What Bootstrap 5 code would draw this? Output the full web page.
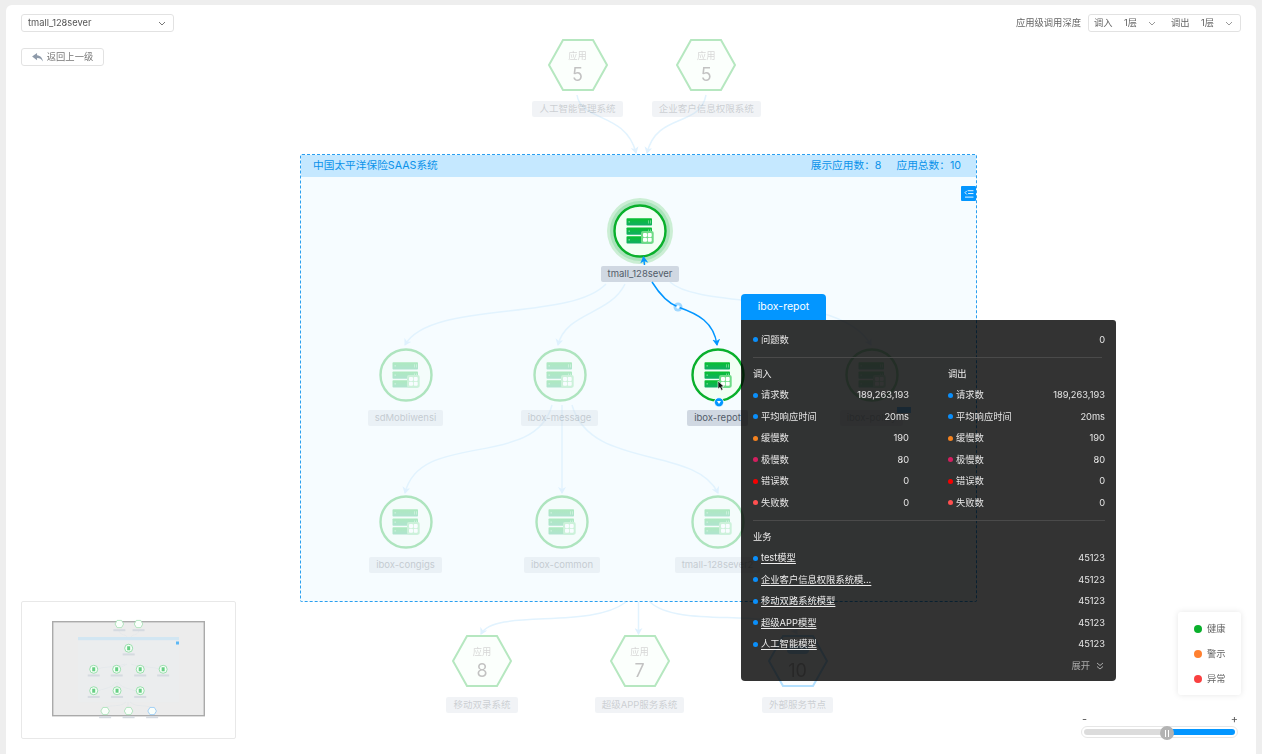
<!DOCTYPE html>
<html lang="zh-CN">
<head>
  <meta charset="UTF-8" />
  <meta name="viewport" content="width=device-width, initial-scale=1.0"/>
  <title>应用拓扑</title>
  <link href="https://cdn.jsdelivr.net/npm/bootstrap@5.3.0/dist/css/bootstrap.min.css" rel="stylesheet">
  <style>
    html, body {
      height: 754px;
      overflow: hidden;
    }
    body {
      background-color: #eeeeee;
      font-family: Inter, "Noto Sans CJK SC", sans-serif;
      font-size: 9.3px;
      color: #555;
      position: relative;
    }
    .app-panel {
      position: absolute;
      left: 6px;
      top: 5px;
      width: 1250px;
      height: 749px;
      background: #fff;
      border-radius: 6px 6px 0 0;
    }
    .topo-canvas {
      position: absolute;
      left: 0;
      top: 0;
      width: 1262px;
      height: 754px;
    }
    .topo-canvas svg.layer {
      position: absolute;
      left: 0;
      top: 0;
    }
    .toolbar {
      position: relative;
      padding: 14px 21px 0;
      z-index: 5;
    }
    .toolbar .form-select {
      width: 153px;
      height: 18px;
      min-height: 18px;
      padding: 0 6px;
      font-size: 9.3px;
      line-height: 16px;
      color: #555;
      border-color: #e2e2e2;
      border-radius: 3px;
      background-image: url("data:image/svg+xml,%3csvg xmlns='http://www.w3.org/2000/svg' viewBox='0 0 8 5'%3e%3cpath fill='none' stroke='%23777' d='M1 1l3 3 3-3'/%3e%3c/svg%3e");
      background-size: 8px 5px;
      background-position: right 7px center;
    }
    .depth-box {
      width: 153px;
      height: 18px;
      border: 1px solid #e2e2e2;
      border-radius: 3px;
      padding-left: 5px;
      color: #666;
    }
    .depth-item { width: 77px; flex: none; }
    .depth-item span:first-child { width: 30px; }
    .depth-item span:nth-child(2) { width: 24px; }
    .depth-label { margin-right: 7px; color: #666; }
    .back-btn {
      position: relative;
      z-index: 5;
      margin: 16px 0 0 21px;
      width: 83px;
      height: 18px;
      padding: 0;
      font-size: 9.3px;
      line-height: 16px;
      color: #777;
      border: 1px solid #e2e2e2;
      border-radius: 3px;
      background: #fff;
    }
    .group-box {
      position: absolute;
      left: 300px;
      top: 154px;
      width: 677px;
      height: 448px;
      background: #f6fcff;
      border: 1px dashed #2a9ff0;
      border-radius: 2px;
    }
    .group-head {
      height: 22px;
      padding: 0 15px 0 12px;
      background: #c5e8ff;
      color: #0a92ea;
      font-size: 10.7px;
    }
    .group-head .group-stat { margin-left: 15px; }
    .group-tool {
      position: absolute;
      right: 0;
      top: 31px;
      width: 15px;
      height: 15px;
      background: #0396ff;
      border-radius: 1px;
    }
    .topo-node {
      position: absolute;
      width: 130px;
    }
    .topo-node.is-faded { opacity: .3; }
    .topo-node svg { display: block; margin: 0 auto; overflow: visible; }
    .node-text {
      height: 16px;
      line-height: 16px;
      padding: 0 7px;
      margin-top: 2px;
      background: #d0d8e2;
      border-radius: 2px;
      color: #525c69;
      font-size: 9.5px;
      white-space: nowrap;
    }
    .hex-wrap { position: relative; height: 66px; }
    .hex-wrap + .node-text { margin-top: 3px; }
    .hex-caption {
      position: absolute;
      left: 0;
      right: 0;
      top: 18px;
      text-align: center;
      font-size: 9.3px;
      line-height: 12px;
      color: #777;
    }
    .hex-num {
      position: absolute;
      left: 0;
      right: 0;
      top: 30.5px;
      text-align: center;
      font-size: 18px;
      line-height: 24px;
      color: #333;
    }
    .hex-pill {
      position: absolute;
      left: 54px;
      top: 18px;
      width: 22px;
      height: 8px;
      border-radius: 4px;
      background: #0396ff;
    }
    .new-tag {
      position: absolute;
      left: 897px;
      top: 407px;
      width: 14px;
      height: 6px;
      background: #0396ff;
      opacity: .5;
    }
    .pop-tab {
      position: absolute;
      left: 741px;
      top: 294px;
      width: 85px;
      height: 26px;
      background: #0396ff;
      border-radius: 4px 4px 0 0;
      color: #fff;
      font-size: 10.5px;
      z-index: 7;
    }
    .pop-card {
      position: absolute;
      left: 741px;
      top: 320px;
      width: 375px;
      height: 361px;
      padding: 9px 11px 0 12px;
      background: rgba(0, 0, 0, .8);
      border-radius: 0 3px 4px 4px;
      color: #e6e6e6;
      z-index: 7;
    }
    .pop-row {
      height: 21.5px;
      white-space: nowrap;
    }
    .pop-dot {
      width: 5px;
      height: 5px;
      border-radius: 50%;
      margin-right: 3px;
      flex: none;
    }
    .pop-line {
      height: 1px;
      margin-top: 6.5px;
      background: #4a4a4a;
    }
    .pop-line.is-short { margin-right: 3px; }
    .pop-head { margin-top: 5px; color: #eee; }
    .pop-cols { gap: 39px; }
    .pop-col-left { width: 156px; }
    .pop-col-right { width: 157px; }
    .pop-link { color: #eee; text-decoration: underline; text-underline-offset: 2px; }
    .pop-more { color: #aaa; gap: 6px; padding-right: 1px; }
    .mini-map {
      position: absolute;
      left: 21px;
      top: 601px;
      width: 215px;
      height: 138px;
      background: #fff;
      border: 1px solid #e8e8e8;
      border-radius: 2px;
    }
    .mini-map svg { position: absolute; left: -1px; top: -1px; overflow: visible; }
    .legend-box {
      position: absolute;
      left: 1178px;
      top: 612px;
      width: 63px;
      height: 83px;
      padding: 4px 0 4px 16px;
      background: #fff;
      border-radius: 3px;
      box-shadow: 0 0 6px rgba(0, 0, 0, .1);
      color: #666;
    }
    .legend-dot {
      width: 8px;
      height: 8px;
      border-radius: 50%;
      margin-right: 5px;
    }
    .legend-row { height: 25px; }
    .zoom-bar {
      position: absolute;
      left: 1081px;
      top: 712px;
      width: 157px;
    }
    .zoom-sign { height: 14px; font-size: 11px; line-height: 14px; color: #555; padding: 0 0 0 1px; }
    .zoom-track {
      position: relative;
      height: 12px;
      padding: 2px;
      background: #fff;
      border: 1px solid #e6e6e6;
      border-radius: 6px;
    }
    .zoom-track-left { width: 56%; background: #dcdcdc; border-radius: 3px 0 0 3px; }
    .zoom-track-right { width: 44%; background: #0396ff; border-radius: 0 3px 3px 0; }
    .zoom-thumb {
      position: absolute;
      left: 78px;
      top: -1px;
      width: 14px;
      height: 14px;
      border-radius: 50%;
      background: #b3b3b3;
      gap: 2px;
    }
    .zoom-thumb i { display: block; width: 1px; height: 7px; background: #fff; }
  </style>
</head>
<body>

<div class="app-panel"></div>

<div class="topo-canvas" id="canvas">
  <div class="group-box">
    <div class="group-head d-flex justify-content-between align-items-center">
      <span>中国太平洋保险SAAS系统</span>
      <span><span class="group-stat">展示应用数：8</span><span class="group-stat">应用总数：10</span></span>
    </div>
    <div class="group-tool d-flex align-items-center justify-content-center">
      <svg width="10" height="8" viewBox="0 0 11 9" fill="none" stroke="#fff" stroke-width="1">
        <path d="M3 1 L1 3 L3 5"/><path d="M4 .8H10.5M4.5 4H10.5M1 8H10.5"/>
      </svg>
    </div>
  </div>
  <svg class="layer" width="1262" height="754" fill="none">
    <defs>
      <linearGradient id="barGreen" x1="0" y1="0" x2="0" y2="1">
        <stop offset="0" stop-color="#08c02f"/>
        <stop offset="1" stop-color="#12ad66"/>
      </linearGradient>
      <marker id="tipFaint" markerWidth="8" markerHeight="8" refX="6" refY="4" orient="auto" markerUnits="userSpaceOnUse">
        <path d="M0 0 L7 4 L0 8 L2 4 Z" fill="#dff1fe"/>
      </marker>
      <marker id="tipBlue" markerWidth="8" markerHeight="8" refX="6" refY="4" orient="auto" markerUnits="userSpaceOnUse">
        <path d="M0 0 L7 4 L0 8 L2 4 Z" fill="#0396ff"/>
      </marker>
    </defs>
    <g stroke="#e2f3fe" stroke-width="1.5" marker-end="url(#tipFaint)">
      <path d="M577 95 C581 122 626 112 636 153"/>
      <path d="M706 95 C700 128 657 112 647 153"/>
      <path d="M606 284 C570 322 430 300 405 345"/>
      <path d="M625 284 C610 315 566 312 558 345"/>
      <path d="M670 282 C700 310 840 290 871 345"/>
      <path d="M552 405 C535 470 420 430 405 493"/>
      <path d="M562 405 V493"/>
      <path d="M572 405 C590 470 695 445 718 493"/>
      <path d="M626 602 C590 630 495 608 481 634"/>
      <path d="M638.5 602 V634"/>
      <path d="M650 602 C680 630 780 605 797 634"/>
    </g>
  </svg>
  <div id="nodes"></div>
  <div class="new-tag"></div>
  <svg class="layer" width="1262" height="754" fill="none">
    <g stroke="#0396ff" stroke-width="1.5">
      <path d="M652 282 C662 298 670 304 678 307 C698 314 714 322 717 345" marker-end="url(#tipBlue)"/>
      <path d="M644.5 265 L643.5 257" marker-end="url(#tipBlue)"/>
    </g>
    <circle cx="678" cy="307" r="4.5" fill="#0396ff" fill-opacity=".35"/>
    <circle cx="678" cy="307" r="1.8" fill="#fff"/>
  </svg>
</div>

<div class="toolbar d-flex justify-content-between align-items-center">
  <select class="form-select" aria-label="应用">
    <option>tmall_128sever</option>
  </select>
  <div class="d-flex align-items-center">
    <span class="depth-label">应用级调用深度</span>
    <div class="depth-box d-flex align-items-center">
      <div class="depth-item d-flex align-items-center"><span>调入</span><span>1层</span><svg width="8" height="5" viewBox="0 0 8 5" fill="none" stroke="#999"><path d="M1 1 L4 4 L7 1"/></svg></div>
      <div class="depth-item d-flex align-items-center"><span>调出</span><span>1层</span><svg width="8" height="5" viewBox="0 0 8 5" fill="none" stroke="#999"><path d="M1 1 L4 4 L7 1"/></svg></div>
    </div>
  </div>
</div>
<button class="back-btn btn d-flex align-items-center justify-content-center gap-1" type="button">
  <svg width="11" height="9" viewBox="0 0 12 10"><path d="M5.5 0 L0 4 L5.5 8 V5.6 C8.5 5.6 10.5 6.8 12 9.5 C11.6 5.8 9.5 3 5.5 2.6 Z" fill="#8e9aaa"/></svg>
  <span>返回上一级</span>
</button>

<div class="pop-tab d-flex align-items-center justify-content-center">ibox-repot</div>
<div class="pop-card" id="popCard"></div>

<div class="mini-map"><svg id="miniMap" width="215" height="138" viewBox="21 601 215 138"></svg></div>

<div class="legend-box">
  <div class="legend-row d-flex align-items-center"><span class="legend-dot" style="background:#0ab02c"></span>健康</div>
  <div class="legend-row d-flex align-items-center"><span class="legend-dot" style="background:#ff8030"></span>警示</div>
  <div class="legend-row d-flex align-items-center"><span class="legend-dot" style="background:#f94040"></span>异常</div>
</div>

<div class="zoom-bar">
  <div class="zoom-sign d-flex justify-content-between"><span>-</span><span>+</span></div>
  <div class="zoom-track d-flex">
    <div class="zoom-track-left"></div>
    <div class="zoom-track-right"></div>
    <div class="zoom-thumb d-flex align-items-center justify-content-center"><i></i><i></i></div>
  </div>
</div>

<script>
  const apps = [
    { name: 'tmall_128sever', x: 640, y: 231, halo: true },
    { name: 'sdMobliwensi', x: 405.5, y: 375, faded: true },
    { name: 'ibox-message', x: 559.5, y: 375, faded: true },
    { name: 'ibox-repot', x: 717.5, y: 375, picked: true },
    { name: 'ibox-policy', x: 871.5, y: 375, faded: true },
    { name: 'ibox-congigs', x: 405.5, y: 522, faded: true },
    { name: 'ibox-common', x: 562, y: 522, faded: true },
    { name: 'tmall-128sever2', x: 717.5, y: 522, faded: true }
  ];
  const systems = [
    { name: '人工智能管理系统', x: 577.5, y: 65, num: 5 },
    { name: '企业客户信息权限系统', x: 706.3, y: 65, num: 5 },
    { name: '移动双录系统', x: 482, y: 661, num: 8 },
    { name: '超级APP服务系统', x: 639.5, y: 661, num: 7 },
    { name: '外部服务节点', x: 797.5, y: 661, num: 10, outer: true }
  ];

  function serverIcon() {
    let bars = '';
    [-12.7, -3.5, 5.3].forEach(top => {
      bars += `<rect x="-13.5" y="${top}" width="25.5" height="7.3" rx=".8" fill="url(#barGreen)"/>
        <rect x="-11.5" y="${top + 3.2}" width="1.4" height=".8" fill="#b8f5c8"/>
        <rect x="8" y="${top + 2}" width=".8" height="3.2" fill="#7fe09a"/>
        <rect x="10" y="${top + 2}" width=".8" height="3.2" fill="#7fe09a"/>`;
    });
    return bars + `<rect x="1" y="0" width="12.7" height="12.7" rx="2" fill="#6edb86"/>
      <rect x="3" y="2" width="4" height="4" rx="1" fill="#fff"/>
      <rect x="7.7" y="2" width="4" height="4" rx="1" fill="#fff"/>
      <rect x="3" y="6.7" width="4" height="4" rx="1" fill="#fff"/>
      <rect x="7.7" y="6.7" width="4" height="4" rx="1" fill="#fff"/>`;
  }

  function appNode(app) {
    const halo = app.halo ? '<circle r="33" fill="#cbeed4"/><circle r="30" fill="#a9e3ba"/>' : '';
    const picked = app.picked ? `<circle cx="1" cy="27.3" r="4.6" fill="#0396ff" stroke="#fff" stroke-width=".8"/>
      <path d="M-1 26 H3 L1 29 Z" fill="#fff"/>
      <path d="M0 6 V14 L2 12.4 L3.4 15.4 L5 14.6 L3.6 11.8 L6 11.6 Z" fill="#111" stroke="#fff" stroke-width=".6"/>` : '';
    return `<div class="topo-node d-flex flex-column align-items-center ${app.faded ? 'is-faded' : ''}"
        style="left:${app.x - 65}px;top:${app.y - 33}px">
      <svg width="66" height="66" viewBox="-33 -33 66 66">
        ${halo}
        <circle r="25.5" fill="#f2fff4" stroke="#0ab02c" stroke-width="2.4"/>
        ${serverIcon()}
        ${picked}
      </svg>
      <div class="node-text">${app.name}</div>
    </div>`;
  }

  function systemNode(sys) {
    const color = sys.outer ? '#0396ff' : '#0ab02c';
    const fill = sys.outer ? '#f0f9ff' : '#f2fff4';
    const caption = sys.outer ? '<div class="hex-pill"></div>' : '<div class="hex-caption">应用</div>';
    return `<div class="topo-node is-faded d-flex flex-column align-items-center"
        style="left:${sys.x - 65}px;top:${sys.y - 33}px">
      <div class="hex-wrap w-100">
        <svg width="66" height="66" viewBox="-33 -33 66 66">
          <path d="M-29 0 L-15 -25 H15 L29 0 L15 25 H-15 Z" fill="${fill}" stroke="${color}" stroke-width="2"/>
        </svg>
        ${caption}
        <div class="hex-num">${sys.num}</div>
      </div>
      <div class="node-text">${sys.name}</div>
    </div>`;
  }

  document.getElementById('nodes').innerHTML =
    systems.map(systemNode).join('') + apps.map(appNode).join('');

  // 弹窗内容
  const BLUE = '#0a8ffb', ORANGE = '#f5821f', CRIMSON = '#d41f5f', RED = '#f50000', SALMON = '#ff5050';
  const metrics = [
    ['请求数', BLUE, '189,263,193'],
    ['平均响应时间', BLUE, '20ms'],
    ['缓慢数', ORANGE, '190'],
    ['极慢数', CRIMSON, '80'],
    ['错误数', RED, '0'],
    ['失败数', SALMON, '0']
  ];
  const models = ['test模型', '企业客户信息权限系统模...', '移动双路系统模型', '超级APP模型', '人工智能模型'];

  function popRow(label, color, value, isLink) {
    const text = isLink ? `<span class="pop-link">${label}</span>` : `<span>${label}</span>`;
    return `<div class="pop-row d-flex justify-content-between align-items-center">
      <div class="d-flex align-items-center"><span class="pop-dot" style="background:${color}"></span>${text}</div>
      <span>${value}</span>
    </div>`;
  }

  function metricCol(title, cls) {
    return `<div class="${cls}">
      <div class="pop-row pop-head d-flex align-items-center">${title}</div>
      ${metrics.map(m => popRow(m[0], m[1], m[2])).join('')}
    </div>`;
  }

  document.getElementById('popCard').innerHTML = `
    ${popRow('问题数', BLUE, '0')}
    <div class="pop-line is-short"></div>
    <div class="d-flex pop-cols">
      ${metricCol('调入', 'pop-col-left')}
      ${metricCol('调出', 'pop-col-right')}
    </div>
    <div class="pop-line"></div>
    <div class="pop-row pop-head d-flex align-items-center">业务</div>
    ${models.map(m => popRow(m, BLUE, '45123', true)).join('')}
    <div class="pop-row pop-more d-flex justify-content-end align-items-center">
      <span>展开</span>
      <svg width="8" height="8" viewBox="0 0 8 8" fill="none" stroke="#aaa"><path d="M1 1 L4 3.5 L7 1M1 4.5 L4 7 L7 4.5"/></svg>
    </div>`;

  // 缩略图
  const mx = x => 78 + (x - 300) * .149;
  const my = y => 637 + (y - 154) * .146;
  let mini = `<rect x="52.7" y="621.7" width="151.6" height="94" fill="#ececec" stroke="#aaa" stroke-width="1.4"/>
    <rect x="78" y="637" width="101" height="65.4" fill="#ebedee"/>
    <rect x="78" y="637" width="101" height="3.2" fill="#d2e6f2"/>
    <rect x="176" y="641.5" width="3" height="3" fill="#5cb8f5"/>
    <g fill="none" stroke="#dfe5e8" stroke-width=".5">
      <path d="M119 631 C121 636 126 634 127 637M139 631 C137 636 132 634 131 637"/>
      <path d="M125 664 C115 668 98 666 93.6 671M127 664 C122 667 118 668 116.6 671M131 664 C140 668 158 666 163 671"/>
      <path d="M116 682 C112 690 98 688 93.6 694M117 682 V694M118 682 C122 690 135 688 140 694"/>
      <path d="M126 702 C120 708 110 704 105 708M128 702 V708M130 702 C136 708 146 704 152 708"/>
    </g>`;
  apps.forEach(a => {
    mini += `<circle cx="${mx(a.x)}" cy="${my(a.y)}" r="4" fill="#f6fff8" stroke="#84d89b" stroke-width=".8"/>
      <rect x="${mx(a.x) - 1.5}" y="${my(a.y) - 2}" width="3" height="4" fill="#67cf84"/>
      <rect x="${mx(a.x) - 6}" y="${my(a.y) + 5.2}" width="12" height="2" fill="#d5dae0"/>`;
  });
  systems.forEach(s => {
    const c = s.outer ? '#8fc6f5' : '#a3dfb3';
    mini += `<path d="M${mx(s.x) - 4.3} ${my(s.y)} l2.1 -3.6 h4.4 l2.1 3.6 l-2.1 3.6 h-4.4 Z" fill="#fafffb" stroke="${c}" stroke-width=".8"/>
      <rect x="${mx(s.x) - 6}" y="${my(s.y) + 5.2}" width="12" height="2" fill="#d5dae0"/>`;
  });
  document.getElementById('miniMap').innerHTML = mini;
</script>
<script src="https://cdn.jsdelivr.net/npm/bootstrap@5.3.0/dist/js/bootstrap.bundle.min.js"></script>
</body>
</html>
